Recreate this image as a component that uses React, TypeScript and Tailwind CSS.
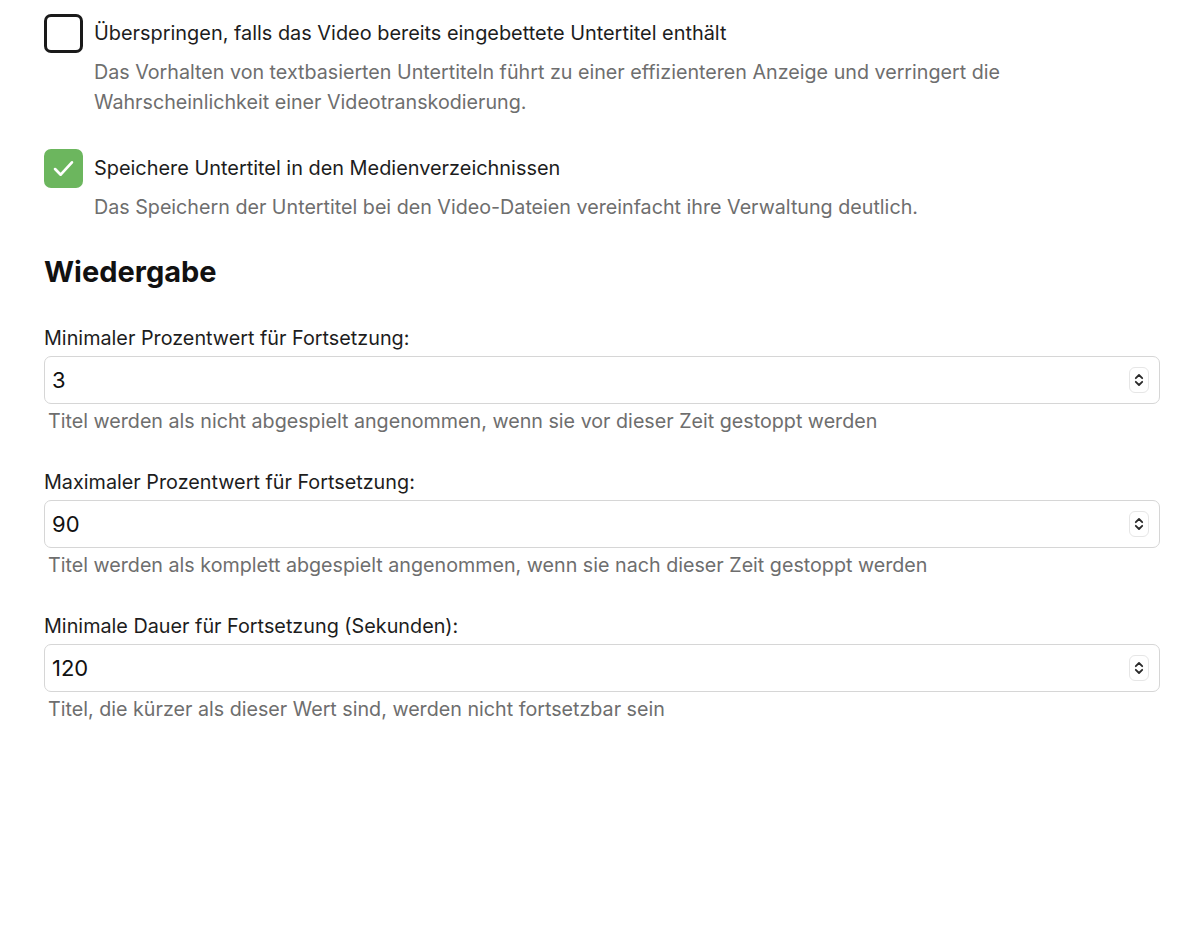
import { useState } from "react"

function Checkbox({ checked, onChange }: { checked: boolean; onChange: () => void }) {
  return (
    <button
      onClick={onChange}
      className={
        checked
          ? "flex h-[39px] w-[39px] shrink-0 items-center justify-center rounded-[7px] bg-[#6cb65e]"
          : "flex h-[39px] w-[39px] shrink-0 items-center justify-center rounded-[7px] border-[3px] border-[#1a1a1a] bg-white"
      }
    >
      {checked && (
        <svg width="27" height="27" viewBox="0 0 24 24" fill="none">
          <path d="M4.5 12.5l5 5L19.5 6.5" stroke="white" strokeWidth="2.4" strokeLinecap="round" strokeLinejoin="round" />
        </svg>
      )}
    </button>
  )
}

function CheckRow({ label, desc, checked, onChange }: { label: string; desc: string; checked: boolean; onChange: () => void }) {
  return (
    <div>
      <div className="flex items-center gap-[11px]">
        <Checkbox checked={checked} onChange={onChange} />
        <span className="text-[19.9px] text-[#1d1d1d]">{label}</span>
      </div>
      <p className="mt-[4px] max-w-[960px] pl-[50px] text-[19.7px] leading-[30px] text-[#6e6e6e]">{desc}</p>
    </div>
  )
}

function Spinner() {
  return (
    <div className="flex h-[26px] w-[20px] flex-col items-center justify-center rounded-[6px] border border-[#e6e6e6] bg-white">
      <svg width="12" height="20" viewBox="0 0 12 20" fill="none">
        <path d="M2.8 8.2L6 5l3.2 3.2" stroke="#2a2a2a" strokeWidth="1.8" strokeLinecap="round" strokeLinejoin="round" />
        <path d="M2.8 11.8L6 15l3.2-3.2" stroke="#2a2a2a" strokeWidth="1.8" strokeLinecap="round" strokeLinejoin="round" />
      </svg>
    </div>
  )
}

function NumberField({ label, value, help }: { label: string; value: string; help: string }) {
  return (
    <div>
      <div className="text-[19.8px] leading-[24px] text-[#1d1d1d]">{label}</div>
      <div className="mt-[6px] flex h-[48px] items-center justify-between rounded-[7px] border border-[#d6d6d6] bg-white pl-[7px] pr-[10px]">
        <span className="text-[22px] text-[#111]">{value}</span>
        <Spinner />
      </div>
      <div className="mt-[4px] pl-[4px] text-[19.7px] leading-[26px] text-[#6e6e6e]">{help}</div>
    </div>
  )
}

export default function App() {
  const [skip, setSkip] = useState(false)
  const [save, setSave] = useState(true)

  return (
    <div className="min-h-[929px] bg-white px-[44px] pt-[14px] font-['Inter',sans-serif]">
      <div className="flex w-[1116px] flex-col">
        <CheckRow
          label="Überspringen, falls das Video bereits eingebettete Untertitel enthält"
          desc="Das Vorhalten von textbasierten Untertiteln führt zu einer effizienteren Anzeige und verringert die Wahrscheinlichkeit einer Videotranskodierung."
          checked={skip}
          onChange={() => setSkip(!skip)}
        />
        <div className="mt-[32px]">
          <CheckRow
            label="Speichere Untertitel in den Medienverzeichnissen"
            desc="Das Speichern der Untertitel bei den Video-Dateien vereinfacht ihre Verwaltung deutlich."
            checked={save}
            onChange={() => setSave(!save)}
          />
        </div>
        <h2 className="mt-[32px] text-[29px] font-bold leading-[36px] text-[#111]">Wiedergabe</h2>
        <div className="mt-[36px] flex flex-col gap-[36px]">
          <NumberField
            label="Minimaler Prozentwert für Fortsetzung:"
            value="3"
            help="Titel werden als nicht abgespielt angenommen, wenn sie vor dieser Zeit gestoppt werden"
          />
          <NumberField
            label="Maximaler Prozentwert für Fortsetzung:"
            value="90"
            help="Titel werden als komplett abgespielt angenommen, wenn sie nach dieser Zeit gestoppt werden"
          />
          <NumberField
            label="Minimale Dauer für Fortsetzung (Sekunden):"
            value="120"
            help="Titel, die kürzer als dieser Wert sind, werden nicht fortsetzbar sein"
          />
        </div>
      </div>
    </div>
  )
}
